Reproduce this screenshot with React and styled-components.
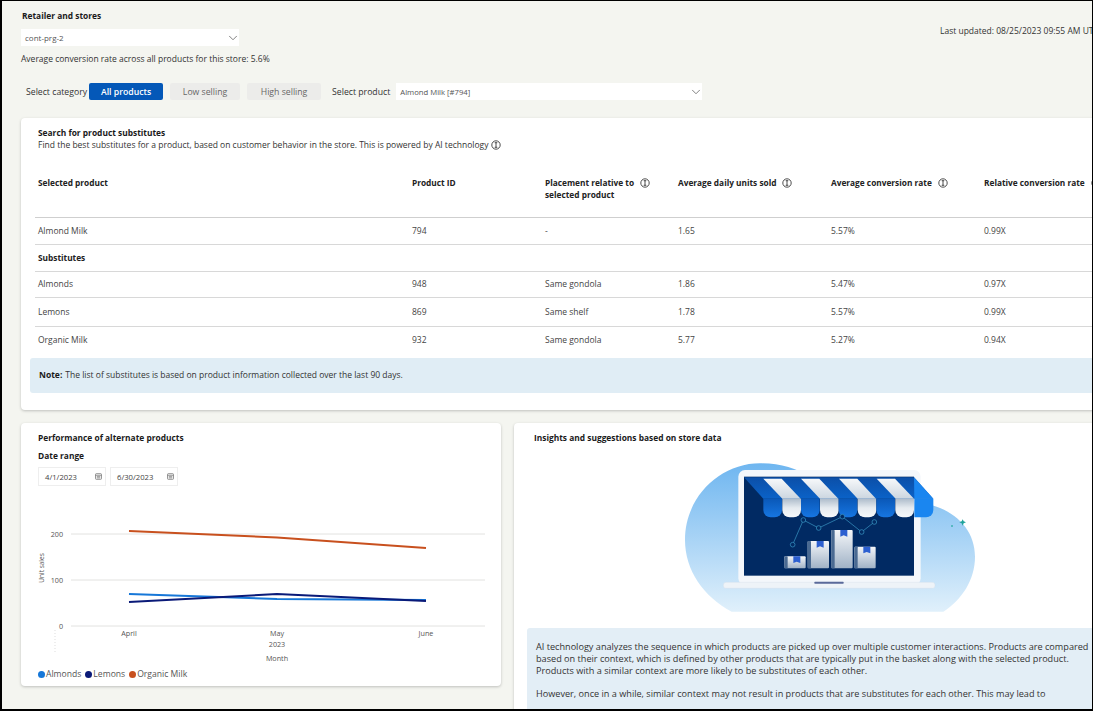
import React from "react";
import styled, { createGlobalStyle } from "styled-components";
import { ChevronDown } from "lucide-react";

const GlobalStyle = createGlobalStyle`
  html, body {
    margin: 0;
    padding: 0;
    background: #000;
  }
  * {
    box-sizing: border-box;
  }
`;

const Frame = styled.div`
  width: 1093px;
  height: 711px;
  overflow: hidden;
  border-style: solid;
  border-color: #000;
  border-width: 1px 1px 2px 2px;
  background: #f4f5f0;
  font-family: "Open Sans", "Noto Sans", sans-serif;
  font-size: 8.5px;
  color: #2b2b2b;
`;

const Content = styled.div`
  width: 1230px;
  padding: 9px 0 0 19px;
  display: flex;
  flex-direction: column;
`;

const TopRow = styled.div`
  display: flex;
  justify-content: space-between;
`;

const StoreBlock = styled.div`
  display: flex;
  flex-direction: column;
`;

const StoreLabel = styled.div`
  font-size: 8.4px;
  font-weight: 700;
  color: #1a1a1a;
  line-height: 12px;
  margin: 0 0 7px 1px;
`;

const SelectBox = styled.div`
  width: ${(p) => p.$width}px;
  height: 17px;
  background: #fff;
  display: flex;
  align-items: center;
  justify-content: space-between;
  padding: 0 0 0 4px;
  font-size: ${(p) => p.$font}px;
  color: #555;
  svg {
    margin-right: -1px;
  }
`;

const ConversionText = styled.div`
  line-height: 12px;
  margin-top: 7px;
  color: #333;
`;

const LastUpdated = styled.div`
  width: 292px;
  margin-top: 15px;
  white-space: nowrap;
  line-height: 12px;
  color: #333;
`;

const CategoryRow = styled.div`
  display: flex;
  align-items: center;
  height: 17px;
  margin: 18px 0 0 5px;
  font-size: 8.7px;
`;

const RowLabel = styled.span`
  white-space: nowrap;
  margin-left: ${(p) => p.$before || 0}px;
  margin-right: ${(p) => p.$gap}px;
  color: #333;
`;

const CategoryButton = styled.div`
  width: ${(p) => p.$width}px;
  height: 17px;
  margin-right: 7px;
  border-radius: 2px;
  display: flex;
  align-items: center;
  justify-content: center;
  background: ${(p) => (p.$active ? "#0458b8" : "#ececea")};
  color: ${(p) => (p.$active ? "#fff" : "#666")};
  font-weight: ${(p) => (p.$active ? 600 : 400)};
`;

const Card = styled.section`
  background: #fff;
  border-radius: 4px;
  box-shadow: 0 1px 3px rgba(0, 0, 0, 0.22);
`;

const SubstitutesCard = styled(Card)`
  height: 292px;
  margin-top: 18px;
  padding: 9px 0 0 9px;
`;

const CardTitle = styled.h2`
  margin: 0;
  font-size: 8.4px;
  font-weight: 700;
  line-height: 12px;
  color: #1a1a1a;
`;

const InsightsTitle = styled(CardTitle)`
  margin-left: 7px;
`;

const CardIntro = styled.div`
  padding-left: 8px;
`;

const IntroText = styled.div`
  display: flex;
  align-items: center;
  gap: 3px;
  line-height: 11px;
  color: #333;
`;

const Table = styled.div`
  margin: 23px 0 0 5px;
`;

const Row = styled.div`
  display: grid;
  grid-template-columns: 374px 133px 133px 153px 153px 1fr;
  padding: ${(p) => (p.$head ? "4px 0 0 3px" : "0 0 2px 3px")};
  height: ${(p) => p.$height}px;
  align-items: ${(p) => (p.$head ? "start" : "center")};
  border-bottom: ${(p) => (p.$line ? `1px solid ${p.$line}` : "none")};
  color: #444;
`;

const HeadCell = styled.div`
  display: flex;
  align-items: flex-start;
  gap: 6px;
  font-size: 8.3px;
  font-weight: 700;
  line-height: 12px;
  color: #222;
  white-space: nowrap;
  svg {
    margin-top: 1px;
  }
`;

const SectionCell = styled.div`
  font-size: 8.3px;
  font-weight: 700;
  color: #222;
`;

const Note = styled.div`
  height: 35px;
  margin-top: 5px;
  padding: 0 0 3px 9px;
  display: flex;
  align-items: center;
  gap: 3px;
  background: #e0edf5;
  border-radius: 3px 0 0 3px;
  color: #333;
  b {
    font-weight: 700;
    color: #1a1a1a;
  }
`;

const BottomRow = styled.div`
  display: flex;
  align-items: flex-start;
  gap: 13px;
  margin-top: 13px;
`;

const ChartCard = styled(Card)`
  width: 480px;
  height: 263px;
  flex-shrink: 0;
  padding: 9px 0 0 17px;
`;

const DateLabel = styled.div`
  font-size: 8.4px;
  font-weight: 700;
  line-height: 12px;
  margin-top: 6px;
  color: #1a1a1a;
`;

const DateRow = styled.div`
  display: flex;
  gap: 4px;
  margin-top: 5px;
`;

const DateField = styled.div`
  width: 68px;
  height: 19px;
  display: flex;
  align-items: center;
  justify-content: space-between;
  padding: 0 3px 0 6px;
  border: 1px solid #eee;
  font-size: 7.7px;
  color: #444;
`;

const ChartSvg = styled.svg`
  display: block;
  width: 450px;
  height: 174px;
  margin-top: 4px;
  overflow: visible;
  text {
    font-family: "Open Sans", "Noto Sans", sans-serif;
    font-size: 7.2px;
    fill: #555;
  }
`;

const Legend = styled.div`
  display: flex;
  gap: 4px;
  margin-top: 4px;
  font-size: 8.6px;
  color: #555;
  line-height: 12px;
`;

const LegendItem = styled.span`
  display: flex;
  align-items: center;
  gap: 1px;
  &::before {
    content: "";
    width: 7px;
    height: 7px;
    border-radius: 50%;
    background: ${(p) => p.$color};
  }
`;

const InsightsCard = styled(Card)`
  flex: 1;
  height: 320px;
  padding: 9px 0 0 13px;
`;

const Illustration = styled.svg`
  display: block;
  width: 330px;
  height: 176px;
  margin-left: 133px;
`;

const InsightBox = styled.div`
  margin-top: 8px;
  padding: 13px 10px 0 9px;
  height: 90px;
  width: 590px;
  background: #e3eef6;
  border-radius: 3px;
  font-size: 9.15px;
  line-height: 12px;
  color: #333;
  p {
    margin: 0 0 11px;
  }
`;

const InfoIcon = () => (
  <svg width="10" height="10" viewBox="0 0 10 10" fill="none" stroke="#222" strokeWidth="0.8">
    <circle cx="5" cy="5" r="4.2" />
    <path d="M3.7 2.7h2.6M5 2.7v4.6M3.7 7.3h2.6" />
  </svg>
);

const CalendarIcon = () => (
  <svg width="7" height="7" viewBox="0 0 8 8" fill="none" stroke="#777" strokeWidth="0.9">
    <rect x="0.6" y="0.8" width="6.8" height="6.4" rx="0.8" />
    <path d="M0.6 2.6h6.8M2 4.2h4M2 5.6h4" />
  </svg>
);

const ChartPanel = () => (
  <ChartSvg viewBox="38 490 450 174">
    <g stroke="#e2e2e0" strokeWidth="1">
      <line x1="71" y1="534" x2="485" y2="534" />
      <line x1="71" y1="580" x2="485" y2="580" />
      <line x1="71" y1="626" x2="485" y2="626" />
    </g>
    <line x1="55" y1="630" x2="55" y2="652" stroke="#ddd" strokeDasharray="1 2" />
    <text x="63" y="537" textAnchor="end">200</text>
    <text x="63" y="583" textAnchor="end">100</text>
    <text x="63" y="629" textAnchor="end">0</text>
    <text transform="translate(43.5 568) rotate(-90)" textAnchor="middle" style={{ fontSize: 6.5 }}>Unit sales</text>
    <polyline points="129,531 277,537.5 426,548" fill="none" stroke="#c8501e" strokeWidth="2" />
    <polyline points="129,594 277,599 426,600" fill="none" stroke="#1677d8" strokeWidth="2" />
    <polyline points="129,602 277,594 426,601" fill="none" stroke="#0a1a78" strokeWidth="2" />
    <text x="129" y="636" textAnchor="middle">April</text>
    <text x="277" y="636" textAnchor="middle">May</text>
    <text x="426" y="636" textAnchor="middle">June</text>
    <text x="277" y="647" textAnchor="middle">2023</text>
    <text x="277" y="661" textAnchor="middle">Month</text>
  </ChartSvg>
);

const scallops = [
  [310, "url(#flapBlue)"],
  [367, "url(#flapWhite)"],
  [423, "url(#flapBlue)"],
  [480, "url(#flapWhite)"],
  [536, "url(#flapBlue)"],
  [593, "url(#flapWhite)"],
  [649, "url(#flapBlue)"],
  [706, "url(#flapWhite)"],
];

const boxes = [
  [373, 349],
  [443, 303],
  [514, 270],
  [583, 320],
];

const StoreIllustration = () => (
  <Illustration viewBox="0 12 990 528">
    <defs>
      <linearGradient id="blob" x1="0" y1="0" x2="0" y2="1">
        <stop offset="0" stopColor="#6fb6f0" />
        <stop offset="1" stopColor="#e0f0fb" />
      </linearGradient>
      <linearGradient id="flapBlue" x1="0" y1="0" x2="0" y2="1">
        <stop offset="0" stopColor="#0a58b8" />
        <stop offset="1" stopColor="#1676e2" />
      </linearGradient>
      <linearGradient id="flapWhite" x1="0" y1="0" x2="0" y2="1">
        <stop offset="0" stopColor="#aebccb" />
        <stop offset="0.5" stopColor="#e6ebf0" />
        <stop offset="1" stopColor="#f6f8fa" />
      </linearGradient>
      <linearGradient id="stripe" x1="0" y1="0" x2="0" y2="1">
        <stop offset="0" stopColor="#f6f8fa" />
        <stop offset="1" stopColor="#ccd6e0" />
      </linearGradient>
      <linearGradient id="awning" x1="0" y1="0" x2="0" y2="1">
        <stop offset="0" stopColor="#0c4fa8" />
        <stop offset="1" stopColor="#0a62c8" />
      </linearGradient>
      <linearGradient id="box" x1="0" y1="0" x2="0" y2="1">
        <stop offset="0" stopColor="#f4f6f9" />
        <stop offset="1" stopColor="#a0b2c6" />
      </linearGradient>
    </defs>
    <path
      d="M215 515 C130 470 75 390 75 300 C75 170 180 70 300 70 C360 70 410 85 450 110 L780 190 C800 195 815 195 830 200 C900 225 945 280 945 350 C945 420 905 480 850 515 Z"
      fill="url(#blob)"
    />
    <rect x="235" y="90" width="547" height="345" rx="20" fill="#f4f7fb" />
    <rect x="252" y="110" width="510" height="297" fill="#012a63" />
    <rect x="190" y="427" width="635" height="18" rx="8" fill="#eef3f8" stroke="#cfdbe8" strokeWidth="1" />
    <rect x="463" y="425" width="88" height="6" rx="2" fill="#5a6a9a" />
    <polygon points="252,112 762,112 820,176 310,176" fill="url(#awning)" />
    <polygon points="762,112 820,176 763,176" fill="#1a86f0" />
    <polygon points="310,116 365,116 422,176 367,176" fill="url(#stripe)" />
    <polygon points="423,116 478,116 535,176 480,176" fill="url(#stripe)" />
    <polygon points="537,116 592,116 648,176 593,176" fill="url(#stripe)" />
    <polygon points="650,116 705,116 762,176 707,176" fill="url(#stripe)" />
    {scallops.map(([x, fill]) => (
      <path
        key={x}
        d={`M${x} 176 h56 v34 a22 22 0 0 1 -22 22 h-12 a22 22 0 0 1 -22 -22 Z`}
        fill={fill}
      />
    ))}
    <path d="M763 176 h57 v34 a22 22 0 0 1 -22 22 h-35 Z" fill="#1a86f0" />
    <polyline
      points="398,314 430,240 476,264 547,230 605,276 643,246"
      fill="none"
      stroke="#3c9bc9"
      strokeWidth="2"
    />
    {[[398, 314], [430, 240], [476, 264], [547, 230], [605, 276], [643, 246]].map(([cx, cy]) => (
      <circle key={cx} cx={cx} cy={cy} r="7" fill="#012a63" stroke="#3c9bc9" strokeWidth="2" />
    ))}
    {boxes.map(([x, y]) => (
      <g key={x}>
        <rect x={x} y={y} width="64" height={385 - y} rx="3" fill="url(#box)" />
        <rect x={x} y={y} width="10" height={385 - y} rx="2" fill="#4a6a92" />
        <polygon
          points={`${x + 27},${y} ${x + 48},${y} ${x + 48},${y + 20} ${x + 37},${y + 16} ${x + 27},${y + 20}`}
          fill="#2c5fd0"
        />
      </g>
    ))}
    <path d="M908 238 L911 244 L918 247 L911 250 L908 257 L905 250 L898 247 L905 244 Z" fill="#1fa39a" />
    <circle cx="876" cy="258" r="3" fill="#3fb0b0" />
  </Illustration>
);

const rows = [
  ["Almonds", "948", "Same gondola", "1.86", "5.47%", "0.97X", 26],
  ["Lemons", "869", "Same shelf", "1.78", "5.57%", "0.99X", 29],
  ["Organic Milk", "932", "Same gondola", "5.77", "5.27%", "0.94X", 26],
];

const App = () => {
  return (
    <Frame>
      <GlobalStyle />
      <Content>
        <TopRow>
          <StoreBlock>
            <StoreLabel>Retailer and stores</StoreLabel>
            <SelectBox $width={218} $font={8}>
              cont-prg-2
              <ChevronDown size={14} strokeWidth={1.4} color="#666" />
            </SelectBox>
            <ConversionText>Average conversion rate across all products for this store: 5.6%</ConversionText>
          </StoreBlock>
          <LastUpdated>Last updated: 08/25/2023 09:55 AM UTC</LastUpdated>
        </TopRow>

        <CategoryRow>
          <RowLabel $gap={2}>Select category</RowLabel>
          <CategoryButton $active $width={74}>All products</CategoryButton>
          <CategoryButton $width={70}>Low selling</CategoryButton>
          <CategoryButton $width={74}>High selling</CategoryButton>
          <RowLabel $before={4} $gap={6}>Select product</RowLabel>
          <SelectBox $width={306} $font={7.7}>
            Almond Milk [#794]
            <ChevronDown size={14} strokeWidth={1.4} color="#666" />
          </SelectBox>
        </CategoryRow>

        <SubstitutesCard>
          <CardIntro>
            <CardTitle>Search for product substitutes</CardTitle>
            <IntroText>
              Find the best substitutes for a product, based on customer behavior in the store. This is powered by AI technology
              <InfoIcon />
            </IntroText>
          </CardIntro>
          <Table>
            <Row $head $height={45} $line="#cfcfcf">
              <HeadCell>Selected product</HeadCell>
              <HeadCell>Product ID</HeadCell>
              <HeadCell>
                <span>Placement relative to<br />selected product</span>
                <InfoIcon />
              </HeadCell>
              <HeadCell>Average daily units sold <InfoIcon /></HeadCell>
              <HeadCell>Average conversion rate <InfoIcon /></HeadCell>
              <HeadCell>Relative conversion rate <InfoIcon /></HeadCell>
            </Row>
            <Row $height={27} $line="#d8d8d8">
              <div>Almond Milk</div>
              <div>794</div>
              <div>-</div>
              <div>1.65</div>
              <div>5.57%</div>
              <div>0.99X</div>
            </Row>
            <Row $height={27} $line="#d8d8d8">
              <SectionCell>Substitutes</SectionCell>
            </Row>
            {rows.map(([name, id, place, units, rate, rel, height], i) => (
              <Row key={id} $height={height} $line={i < 2 ? "#d8d8d8" : undefined}>
                <div>{name}</div>
                <div>{id}</div>
                <div>{place}</div>
                <div>{units}</div>
                <div>{rate}</div>
                <div>{rel}</div>
              </Row>
            ))}
          </Table>
          <Note>
            <b>Note:</b> The list of substitutes is based on product information collected over the last 90 days.
          </Note>
        </SubstitutesCard>

        <BottomRow>
          <ChartCard>
            <CardTitle>Performance of alternate products</CardTitle>
            <DateLabel>Date range</DateLabel>
            <DateRow>
              <DateField>4/1/2023 <CalendarIcon /></DateField>
              <DateField>6/30/2023 <CalendarIcon /></DateField>
            </DateRow>
            <ChartPanel />
            <Legend>
              <LegendItem $color="#1677d8">Almonds</LegendItem>
              <LegendItem $color="#0a1a78">Lemons</LegendItem>
              <LegendItem $color="#c8501e">Organic Milk</LegendItem>
            </Legend>
          </ChartCard>
          <InsightsCard>
            <InsightsTitle>Insights and suggestions based on store data</InsightsTitle>
            <StoreIllustration />
            <InsightBox>
              <p>
                AI technology analyzes the sequence in which products are picked up over multiple customer interactions. Products are compared based on their context, which is defined by other products that are typically put in the basket along with the selected product. Products with a similar context are more likely to be substitutes of each other.
              </p>
              <p>
                However, once in a while, similar context may not result in products that are substitutes for each other. This may lead to
              </p>
            </InsightBox>
          </InsightsCard>
        </BottomRow>
      </Content>
    </Frame>
  );
};

export default App;
